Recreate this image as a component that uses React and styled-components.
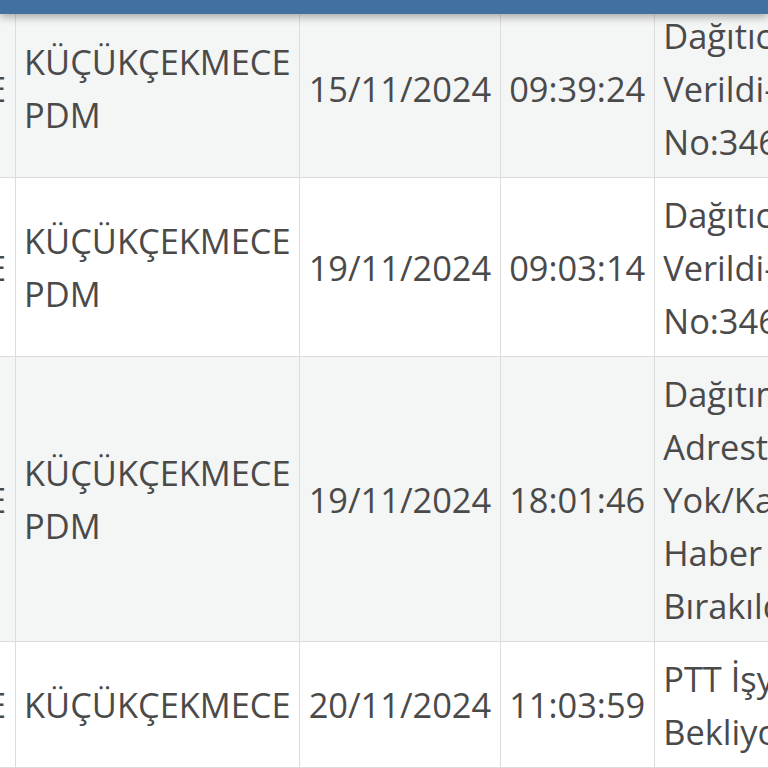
import React, { useLayoutEffect, useRef } from "react";
import styled, { createGlobalStyle } from "styled-components";

const GlobalStyle = createGlobalStyle`
  html, body {
    margin: 0;
    padding: 0;
    background: #ffffff;
    overflow: hidden;
  }
  body {
    font-family: "Open Sans", "Noto Sans", sans-serif;
  }
`;

const TopBar = styled.div`
  position: fixed;
  top: 0;
  left: 0;
  right: 0;
  height: 14px;
  background: #41719e;
  box-shadow: 0 3px 8px rgba(0, 0, 0, 0.32);
  z-index: 2;
`;

const Scroller = styled.div`
  width: 768px;
  height: 768px;
  overflow: hidden;
`;

const Table = styled.table`
  border-collapse: collapse;
  color: #4a4a4a;
  font-size: 34.4px;
  line-height: 53px;
  white-space: nowrap;
`;

const Row = styled.tr`
  background: ${(p) => (p.$striped ? "#f4f5f5" : "#ffffff")};
`;

const Cell = styled.td`
  border: 1px solid #dcdcdc;
  padding: 9.5px 8.5px;
  vertical-align: middle;
  text-align: left;
`;

const rows = [
  {
    office: ["KÜÇÜKÇEKMECE", "PDM"],
    date: "15/11/2024",
    time: "09:39:24",
    desc: ["Dağıtıcıya", "Verildi-Posta", "No:34600"],
  },
  {
    office: ["KÜÇÜKÇEKMECE", "PDM"],
    date: "19/11/2024",
    time: "09:03:14",
    desc: ["Dağıtıcıya", "Verildi-Posta", "No:34600"],
  },
  {
    office: ["KÜÇÜKÇEKMECE", "PDM"],
    date: "19/11/2024",
    time: "18:01:46",
    desc: ["Dağıtım", "Adreste Kimse", "Yok/Kapalı", "Haber Kağıdı", "Bırakıldı"],
  },
  {
    office: ["KÜÇÜKÇEKMECE"],
    date: "20/11/2024",
    time: "11:03:59",
    desc: ["PTT İşyerinde", "Bekliyor"],
  },
  {
    office: ["KÜÇÜKÇEKMECE", "PDM"],
    date: "21/11/2024",
    time: "10:12:05",
    desc: ["Teslim", "Edildi"],
  },
];

const Lines = ({ items }) =>
  items.map((t, i) => (
    <React.Fragment key={i}>
      {i > 0 && <br />}
      {t}
    </React.Fragment>
  ));

export default function App() {
  const scroller = useRef(null);
  const firstCell = useRef(null);
  const firstRow = useRef(null);

  // the table is scrolled sideways and down, as in the captured phone screen
  useLayoutEffect(() => {
    const s = scroller.current;
    const c = firstCell.current;
    const r = firstRow.current;
    s.scrollLeft = c.offsetLeft + c.offsetWidth - 15;
    s.scrollTop = r.offsetTop + r.offsetHeight - 177;
  }, []);

  return (
    <>
      <GlobalStyle />
      <TopBar />
      <Scroller ref={scroller}>
        <Table>
          <tbody>
            {rows.map((r, i) => (
              <Row key={i} $striped={i % 2 === 0} ref={i === 0 ? firstRow : null}>
                <Cell ref={i === 0 ? firstCell : null}>KÜÇÜKÇEKMECE</Cell>
                <Cell>
                  <Lines items={r.office} />
                </Cell>
                <Cell>{r.date}</Cell>
                <Cell>{r.time}</Cell>
                <Cell>
                  <Lines items={r.desc} />
                </Cell>
              </Row>
            ))}
          </tbody>
        </Table>
      </Scroller>
    </>
  );
}
